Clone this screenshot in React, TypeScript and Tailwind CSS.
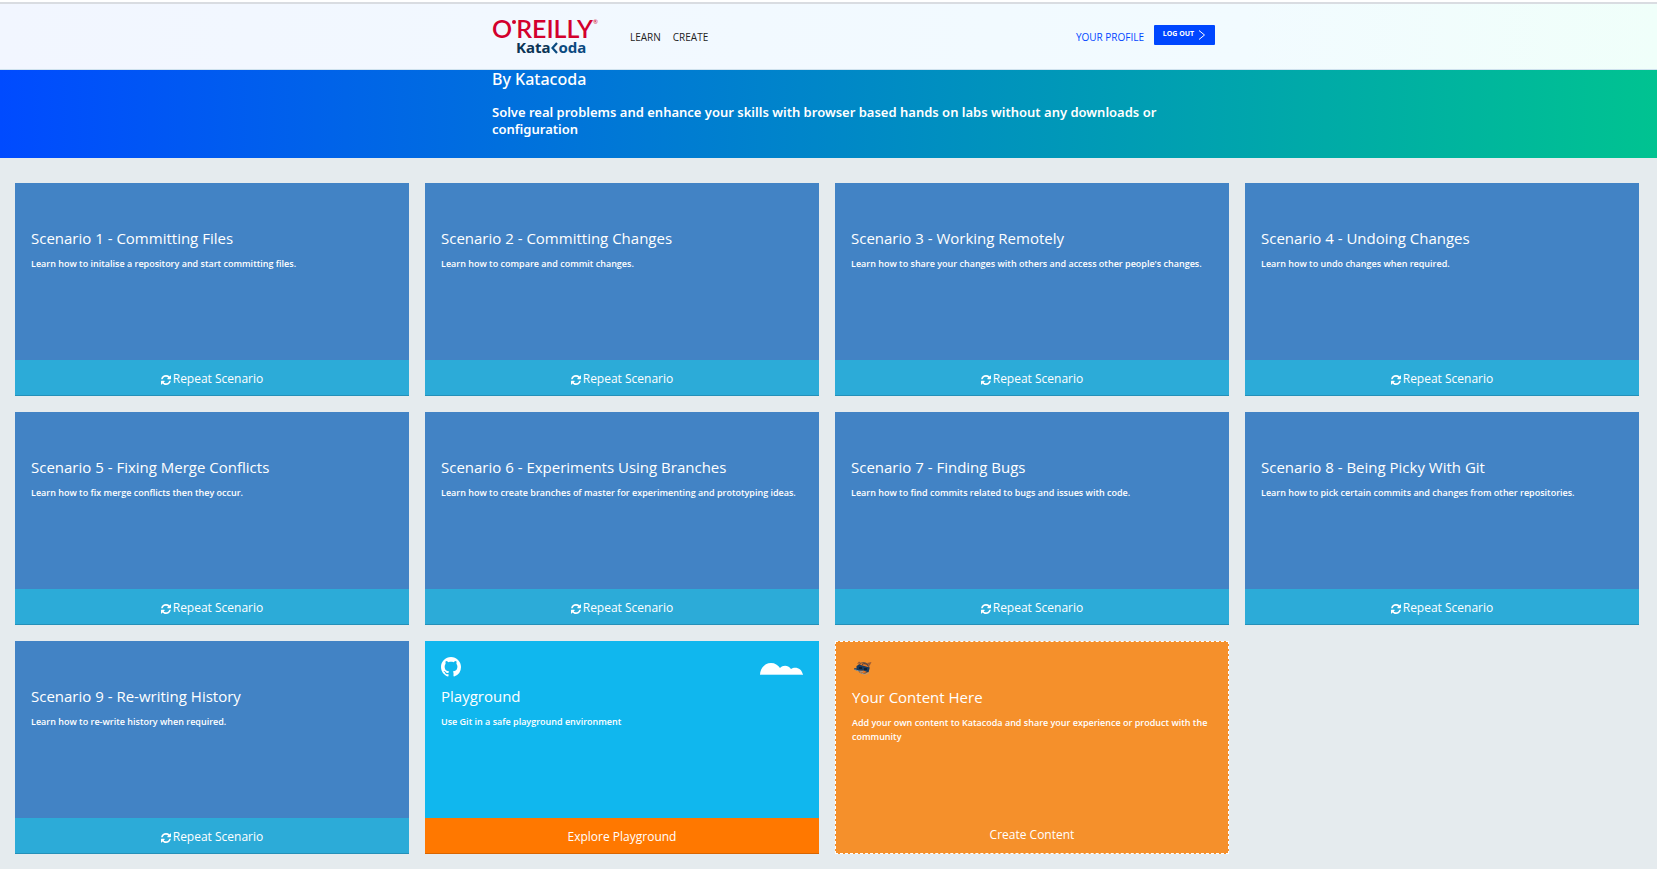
import type { ReactNode } from "react";

const scenarios = [
  ["Scenario 1 - Committing Files", "Learn how to initalise a repository and start committing files."],
  ["Scenario 2 - Committing Changes", "Learn how to compare and commit changes."],
  ["Scenario 3 - Working Remotely", "Learn how to share your changes with others and access other people's changes."],
  ["Scenario 4 - Undoing Changes", "Learn how to undo changes when required."],
  ["Scenario 5 - Fixing Merge Conflicts", "Learn how to fix merge conflicts then they occur."],
  ["Scenario 6 - Experiments Using Branches", "Learn how to create branches of master for experimenting and prototyping ideas."],
  ["Scenario 7 - Finding Bugs", "Learn how to find commits related to bugs and issues with code."],
  ["Scenario 8 - Being Picky With Git", "Learn how to pick certain commits and changes from other repositories."],
  ["Scenario 9 - Re-writing History", "Learn how to re-write history when required."],
];

function RefreshIcon() {
  return (
    <svg viewBox="0 0 1536 1536" className="mt-[2px] size-[10px] fill-current" aria-hidden="true">
      <path d="M1511 928q0 5-1 7-64 268-268 434.500t-478 166.500q-146 0-282.500-55t-243.500-157l-129 129q-19 19-45 19t-45-19-19-45v-448q0-26 19-45t45-19h448q26 0 45 19t19 45-19 45l-137 137q71 66 161 102t187 36q134 0 250-65t186-179q11-17 53-117 8-23 30-23h192q13 0 22.500 9.500t9.500 22.500zm25-800v448q0 26-19 45t-45 19h-448q-26 0-45-19t-19-45 19-45l138-138q-148-137-349-137-134 0-250 65t-186 179q-11 17-53 117-8 23-30 23h-199q-13 0-22.500-9.500t-9.500-22.500v-7q65-268 270-434.500t480-166.500q146 0 284 55.500t245 156.500l130-129q19-19 45-19t45 19 19 45z" />
    </svg>
  );
}

function GithubIcon() {
  return (
    <svg viewBox="0 0 16 16" className="size-5 fill-white" aria-hidden="true">
      <path d="M8 0C3.580 0 0 3.580 0 8c0 3.540 2.290 6.530 5.470 7.590.4.070.55-.17.55-.38 0-.19-.01-.82-.01-1.490-2.010.37-2.530-.49-2.690-.94-.09-.23-.48-.94-.82-1.130-.28-.15-.68-.52-.01-.53.63-.01 1.080.58 1.230.82.72 1.210 1.870.87 2.330.66.07-.52.28-.87.51-1.070-1.780-.2-3.640-.89-3.640-3.950 0-.87.31-1.590.82-2.150-.08-.2-.36-1.020.08-2.120 0 0 .67-.21 2.200.82.64-.18 1.320-.27 2-.27s1.360.09 2 .27c1.530-1.040 2.200-.82 2.200-.82.44 1.100.16 1.920.08 2.120.51.56.82 1.270.82 2.150 0 3.070-1.870 3.750-3.650 3.950.29.25.54.73.54 1.480 0 1.070-.01 1.930-.01 2.200 0 .21.15.46.55.38A8.010 8.010 0 0 0 16 8c0-4.420-3.580-8-8-8z" />
    </svg>
  );
}

function CloudIcon() {
  return (
    <svg viewBox="0 0 43 12" className="mt-1 h-3 w-[43px]" aria-hidden="true">
      <path d="M0 12C0 5 5 0 11 0c4 0 7 2 9 5 3-3 8-3 11 1 4-3 11-1 12 6z" fill="#fff" />
      <path d="M0 11.500h43" stroke="#b9e9fb" />
    </svg>
  );
}

function MascotIcon() {
  return (
    <svg viewBox="0 0 20 14" className="ml-px h-[14px] w-5" aria-hidden="true">
      <circle cx="10.500" cy="7" r="5.500" fill="#e87722" stroke="#705848" strokeWidth="1.200" />
      <path d="M4 3 6 .5 8 2zM14 2l4.500-1-2 4z" fill="#9a5a35" />
      <path d="M3.500 5 6 3.500l7 2 3.500 1-1 5-5-2-5 .5L1 8.500l.5-1.500 2 .5z" fill="#173a5e" />
      <path d="M6 6h3v2H6zM11 7h3v2h-3z" fill="#0c2036" />
      <path d="M1.500 8.500 6 10l4 .500" stroke="#8fa0a8" fill="none" strokeWidth=".8" />
      <path d="m7 11.500 5 2 4-2" stroke="#a9a295" fill="none" strokeWidth=".8" />
      <path d="M9 3.500c2-1.500 4-1 6 1" stroke="#3a3d48" fill="none" />
    </svg>
  );
}

function CardText({ title, text }: { title: string; text: string }) {
  return (
    <>
      <h3 className="mt-2 text-[15px] leading-[22px] font-medium">{title}</h3>
      <p className="mt-2 text-[9px] leading-[14px] font-semibold">{text}</p>
    </>
  );
}

function Card({ icons, title, text, body, button, action }: {
  icons?: ReactNode; title: string; text: string; body: string; button: string; action: ReactNode;
}) {
  return (
    <article className="flex min-h-[213px] flex-col">
      <div className={`flex-1 px-4 pt-4 ${body}`}>
        <div className="flex h-5 items-center justify-between">{icons}</div>
        <CardText title={title} text={text} />
      </div>
      <button className={`flex h-9 items-center justify-center gap-[2px] border-b pt-[2px] text-xs ${button}`}>{action}</button>
    </article>
  );
}

function Logo() {
  return (
    <a href="#" aria-label="O'Reilly Katacoda" className="flex w-[108px] flex-col pt-px font-['Lato',sans-serif]">
      <span className="flex text-[25px] leading-5 font-semibold text-[#d3002d]">
        O<span className="mt-[2px] size-1 rounded-full bg-[#d3002d]" />REILLY
        <span className="text-[6px] leading-2 font-normal">®</span>
      </span>
      <span className="ml-6 flex items-center font-['Noto_Sans',sans-serif] text-[15px] leading-[18px] font-bold text-[#0b3455]">
        Kata
        <svg viewBox="0 0 8 12" className="mt-[2px] h-3 w-2" aria-hidden="true">
          <path d="M7 1 2.500 6 7 11" fill="none" stroke="#0b4a80" strokeWidth="2.200" />
        </svg>
        <span className="text-[#0b4a80]">oda</span>
      </span>
    </a>
  );
}

export default function App() {
  return (
    <div className="min-h-screen bg-[#e5ebee] font-['Open_Sans','Noto_Sans',sans-serif] text-white">
      <header className="border-b border-[#cfe2ee] bg-linear-to-r/srgb from-[#f2f6ff] via-[#f2fbff] via-75% to-[#f0fffa]">
        <div className="h-1 border-t-2 border-b-2 border-t-white border-b-[#d9dce1]" />
        <div className="mx-auto flex h-[65px] w-full max-w-[773px] items-center pl-[50px]">
          <Logo />
          <nav className="ml-[30px] flex gap-3 text-[10px] leading-4 text-[#222]">
            <a href="#">LEARN</a>
            <a href="#">CREATE</a>
          </nav>
          <a href="#" className="ml-auto text-[10px] leading-4 text-[#0047ff]">YOUR PROFILE</a>
          <button className="mb-1 ml-[10px] flex h-5 w-[61px] items-center justify-center gap-1 rounded-[1px] bg-[#0047ff] text-[7px] font-bold">
            LOG OUT
            <svg viewBox="0 0 8 10" className="h-[10px] w-2" aria-hidden="true">
              <path d="M1 .5 6.500 5 1 9.500" fill="none" stroke="#fff" />
            </svg>
          </button>
        </div>
      </header>
      <section className="h-[88px] bg-linear-to-r/srgb from-[#004bff] to-[#00c391] font-['Noto_Sans',sans-serif]">
        <div className="mx-auto max-w-[773px] pl-[50px]">
          <h2 className="text-base leading-[18px] font-medium">By Katacoda</h2>
          <p className="mt-4 pr-12 text-[13px] leading-[17px] font-semibold">
            Solve real problems and enhance your skills with browser based hands on labs without any downloads or configuration
          </p>
        </div>
      </section>
      <main className="grid grid-cols-4 gap-4 pt-[25px] pr-[18px] pb-4 pl-[15px]">
        {scenarios.map(([title, text]) => (
          <Card key={title} title={title} text={text} body="bg-[#4283c5]" button="border-[#2590b8] bg-[#2cabd8]" action={<><RefreshIcon />Repeat Scenario</>} />
        ))}
        <Card icons={<><GithubIcon /><CloudIcon /></>} title="Playground" text="Use Git in a safe playground environment" body="bg-[#10b7ee]" button="border-[#d96500] bg-[#ff7800]" action="Explore Playground" />
        <article className="flex min-h-[213px] flex-col border border-dashed border-white bg-[#f5902b]">
          <div className="flex-1 px-4 pt-4">
            <div className="flex h-5 items-center"><MascotIcon /></div>
            <CardText title="Your Content Here" text="Add your own content to Katacoda and share your experience or product with the community" />
          </div>
          <button className="h-9 text-xs">Create Content</button>
        </article>
      </main>
    </div>
  );
}
